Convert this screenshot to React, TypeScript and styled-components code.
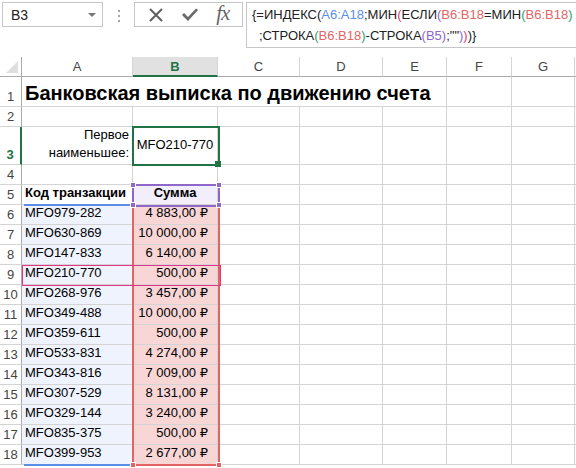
import * as React from 'react';
import styled, { createGlobalStyle } from 'styled-components';

const GlobalStyle = createGlobalStyle`
  html, body {
    margin: 0;
    padding: 0;
    background: #ffffff;
    font-family: 'Liberation Sans', 'DejaVu Sans', sans-serif;
    overflow: hidden;
  }
`;

const Page = styled.div`
  width: 576px;
  height: 468px;
  overflow: hidden;
  background: #fff;
`;

const FormulaBar = styled.div`
  display: flex;
  align-items: flex-start;
  height: 57px;
  padding: 2px 0 0 2px;
  box-sizing: border-box;
`;

const NameBox = styled.div`
  display: flex;
  align-items: center;
  justify-content: space-between;
  width: 101px;
  height: 25px;
  box-sizing: border-box;
  border: 1px solid #c6c6c6;
  padding: 0 6px 0 8px;
  font-size: 14px;
  color: #222;
`;

const DropArrow = styled.span`
  width: 0;
  height: 0;
  border-left: 4px solid transparent;
  border-right: 4px solid transparent;
  border-top: 4px solid #777;
`;

const Grip = styled.div`
  display: flex;
  flex-direction: column;
  gap: 3px;
  margin: 8px 14px 0 15px;

  span {
    width: 2px;
    height: 2px;
    background: #a6a6a6;
  }
`;

const ButtonBox = styled.div`
  display: flex;
  align-items: center;
  justify-content: space-around;
  width: 109px;
  height: 25px;
  box-sizing: border-box;
  border: 1px solid #c6c6c6;
  padding: 0 4px;
`;

const Fx = styled.span`
  font-family: 'Liberation Serif', 'DejaVu Serif', serif;
  font-style: italic;
  font-size: 21px;
  color: #666;
  letter-spacing: -1px;
  margin-top: -2px;
`;

const FormulaBox = styled.div`
  flex: 1;
  margin-left: 3px;
  height: 46px;
  box-sizing: border-box;
  border: 1px solid #c6c6c6;
  border-right: none;
  padding: 1px 0 0 5px;
  font-size: 13px;
  line-height: 21px;
  color: #222;
  white-space: nowrap;
  overflow: hidden;
`;

const FormulaLine = styled.div<{ $indent?: number }>`
  padding-left: ${(p) => p.$indent || 0}px;
`;

const Ref = styled.span<{ $c: string }>`
  color: ${(p) => p.$c};
`;

const Sheet = styled.div`
  position: relative;
  display: grid;
  grid-template-columns: 22px 111px 85px 82px 83px 64px 65px 63px 40px;
  grid-template-rows: 20px 30px 20px 38px 20px 20px repeat(13, 20px);
`;

const Corner = styled.div`
  border-right: 1px solid #ababab;
  border-bottom: 1px solid #ababab;
  position: relative;

  &::after {
    content: '';
    position: absolute;
    right: 3px;
    bottom: 3px;
    width: 0;
    height: 0;
    border-left: 12px solid transparent;
    border-bottom: 12px solid #dfdfdf;
  }
`;

const ColHead = styled.div<{ $sel?: boolean }>`
  display: flex;
  align-items: center;
  justify-content: center;
  font-size: 13px;
  color: ${(p) => (p.$sel ? '#217346' : '#444')};
  font-weight: ${(p) => (p.$sel ? 700 : 400)};
  background: ${(p) => (p.$sel ? '#e1e1e1' : '#fff')};
  border-right: 1px solid #d4d4d4;
  border-bottom: ${(p) => (p.$sel ? '2px solid #217346' : '1px solid #ababab')};
  box-sizing: border-box;
`;

const RowHead = styled.div<{ $sel?: boolean }>`
  display: flex;
  align-items: flex-end;
  justify-content: center;
  padding-bottom: 2px;
  font-size: 13px;
  color: ${(p) => (p.$sel ? '#217346' : '#444')};
  font-weight: ${(p) => (p.$sel ? 700 : 400)};
  border-right: ${(p) => (p.$sel ? '2px solid #217346' : '1px solid #ababab')};
  border-bottom: 1px solid #d4d4d4;
  box-sizing: border-box;
`;

const Cell = styled.div<{
  $bg?: string;
  $align?: 'left' | 'right' | 'center';
  $bold?: boolean;
  $middle?: boolean;
}>`
  display: flex;
  align-items: ${(p) => (p.$middle ? 'center' : 'flex-end')};
  justify-content: ${(p) =>
    p.$align === 'right' ? 'flex-end' : p.$align === 'center' ? 'center' : 'flex-start'};
  text-align: ${(p) => p.$align || 'left'};
  background: ${(p) => p.$bg || '#fff'};
  font-size: 13px;
  font-weight: ${(p) => (p.$bold ? 700 : 400)};
  color: #000;
  padding: 0 3px 2px 3px;
  line-height: 18px;
  border-right: 1px solid #d4d4d4;
  border-bottom: 1px solid #d4d4d4;
  box-sizing: border-box;
  white-space: nowrap;
  min-width: 0;
`;

const TitleCell = styled(Cell)`
  grid-column: span 5;
  font-size: 20px;
  line-height: 24px;
  padding-bottom: 1px;
`;

const Amount = styled.span`
  padding-right: 6px;
`;

const RangeBox = styled.div<{ $c: string; $w?: number }>`
  position: absolute;
  border: ${(p) => p.$w ?? 2}px solid ${(p) => p.$c};
  box-sizing: border-box;
  pointer-events: none;
`;

const Handle = styled.div<{ $c: string }>`
  position: absolute;
  width: 6px;
  height: 6px;
  background: ${(p) => p.$c};
  border: 1px solid #fff;
  box-sizing: border-box;
`;

const rows: [string, string][] = [
  ['MFO979-282', '4 883,00 ₽'],
  ['MFO630-869', '10 000,00 ₽'],
  ['MFO147-833', '6 140,00 ₽'],
  ['MFO210-770', '500,00 ₽'],
  ['MFO268-976', '3 457,00 ₽'],
  ['MFO349-488', '10 000,00 ₽'],
  ['MFO359-611', '500,00 ₽'],
  ['MFO533-831', '4 274,00 ₽'],
  ['MFO343-816', '7 009,00 ₽'],
  ['MFO307-529', '8 131,00 ₽'],
  ['MFO329-144', '3 240,00 ₽'],
  ['MFO835-375', '500,00 ₽'],
  ['MFO399-953', '2 677,00 ₽'],
];

const cols = ['A', 'B', 'C', 'D', 'E', 'F', 'G', ''];
const BLUE = '#5b8ee6';
const RED = '#e46464';
const PURPLE = '#8e67c9';
const GREEN = '#217346';
const PINK = '#e8386e';
const TEAL = '#2e9e6a';

const Empty = ({ n }: { n: number }) => (
  <>
    {Array.from({ length: n }).map((_, i) => (
      <Cell key={i} />
    ))}
  </>
);

const App = () => (
  <Page>
    <GlobalStyle />
    <FormulaBar>
      <NameBox>
        B3
        <DropArrow />
      </NameBox>
      <Grip>
        <span />
        <span />
        <span />
      </Grip>
      <ButtonBox>
        <svg width="16" height="16" viewBox="0 0 16 16">
          <path d="M2 2 L14 14 M14 2 L2 14" stroke="#5f5f5f" strokeWidth="2" fill="none" />
        </svg>
        <svg width="18" height="16" viewBox="0 0 18 16">
          <path d="M1 8 L7 14 L17 3 L15 1.5 L7 10 L3 6 Z" fill="#6a6a6a" />
        </svg>
        <Fx>fx</Fx>
      </ButtonBox>
      <FormulaBox>
        <FormulaLine>
          {'{=ИНДЕКС('}
          <Ref $c={BLUE}>A6:A18</Ref>
          ;МИН<Ref $c={PINK}>(</Ref>ЕСЛИ<Ref $c={PURPLE}>(</Ref>
          <Ref $c={RED}>B6:B18</Ref>=МИН<Ref $c={TEAL}>(</Ref>
          <Ref $c={RED}>B6:B18</Ref>
          <Ref $c={TEAL}>)</Ref>
        </FormulaLine>
        <FormulaLine $indent={7}>
          ;СТРОКА<Ref $c={TEAL}>(</Ref>
          <Ref $c={RED}>B6:B18</Ref>
          <Ref $c={TEAL}>)</Ref>-СТРОКА<Ref $c={PURPLE}>(</Ref>
          <Ref $c={PURPLE}>B5</Ref>
          <Ref $c={PURPLE}>)</Ref>;""<Ref $c={PURPLE}>)</Ref>
          <Ref $c={PINK}>)</Ref>
          {')}'}
        </FormulaLine>
      </FormulaBox>
    </FormulaBar>

    <Sheet>
      <Corner />
      {cols.map((c, i) => (
        <ColHead key={i} $sel={c === 'B'}>
          {c}
        </ColHead>
      ))}

      <RowHead>1</RowHead>
      <TitleCell $bold>Банковская выписка по движению счета</TitleCell>
      <Empty n={3} />

      <RowHead>2</RowHead>
      <Empty n={8} />

      <RowHead $sel>3</RowHead>
      <Cell $align="right">
        Первое
        <br />
        наименьшее:
      </Cell>
      <Cell $middle $align="center">
        MFO210-770
      </Cell>
      <Empty n={6} />

      <RowHead>4</RowHead>
      <Empty n={8} />

      <RowHead>5</RowHead>
      <Cell $bold>Код транзакции</Cell>
      <Cell $bold $align="center" $bg="#f2eefb">
        Сумма
      </Cell>
      <Empty n={6} />

      {rows.map(([code, sum], i) => (
        <React.Fragment key={code}>
          <RowHead>{i + 6}</RowHead>
          <Cell $bg="#eef3fd">{code}</Cell>
          <Cell $bg="#f9d6d6" $align="right">
            <Amount>{sum}</Amount>
          </Cell>
          <Empty n={6} />
        </React.Fragment>
      ))}

      {/* range finder overlays */}
      <RangeBox
        $c={BLUE}
        style={{ left: 24, top: 147, width: 108, height: 262, borderLeft: 'none', borderRight: 'none' }}
      />
      <RangeBox $c={RED} style={{ left: 132, top: 148, width: 88, height: 261 }} />
      <Handle $c={RED} style={{ left: 130, top: 405 }} />
      <Handle $c={RED} style={{ left: 216, top: 405 }} />
      <RangeBox $c={PURPLE} style={{ left: 132, top: 127, width: 88, height: 23 }} />
      <Handle $c={PURPLE} style={{ left: 130, top: 125 }} />
      <Handle $c={PURPLE} style={{ left: 216, top: 125 }} />
      <Handle $c={PURPLE} style={{ left: 130, top: 145 }} />
      <Handle $c={PURPLE} style={{ left: 216, top: 145 }} />
      <RangeBox $c="#e4338b" $w={1} style={{ left: 22, top: 208, width: 199, height: 21 }} />
      <RangeBox $c={GREEN} style={{ left: 132, top: 69, width: 88, height: 40 }} />
      <Handle $c={GREEN} style={{ left: 215, top: 104, border: 'none' }} />
    </Sheet>
  </Page>
);

export default App;
